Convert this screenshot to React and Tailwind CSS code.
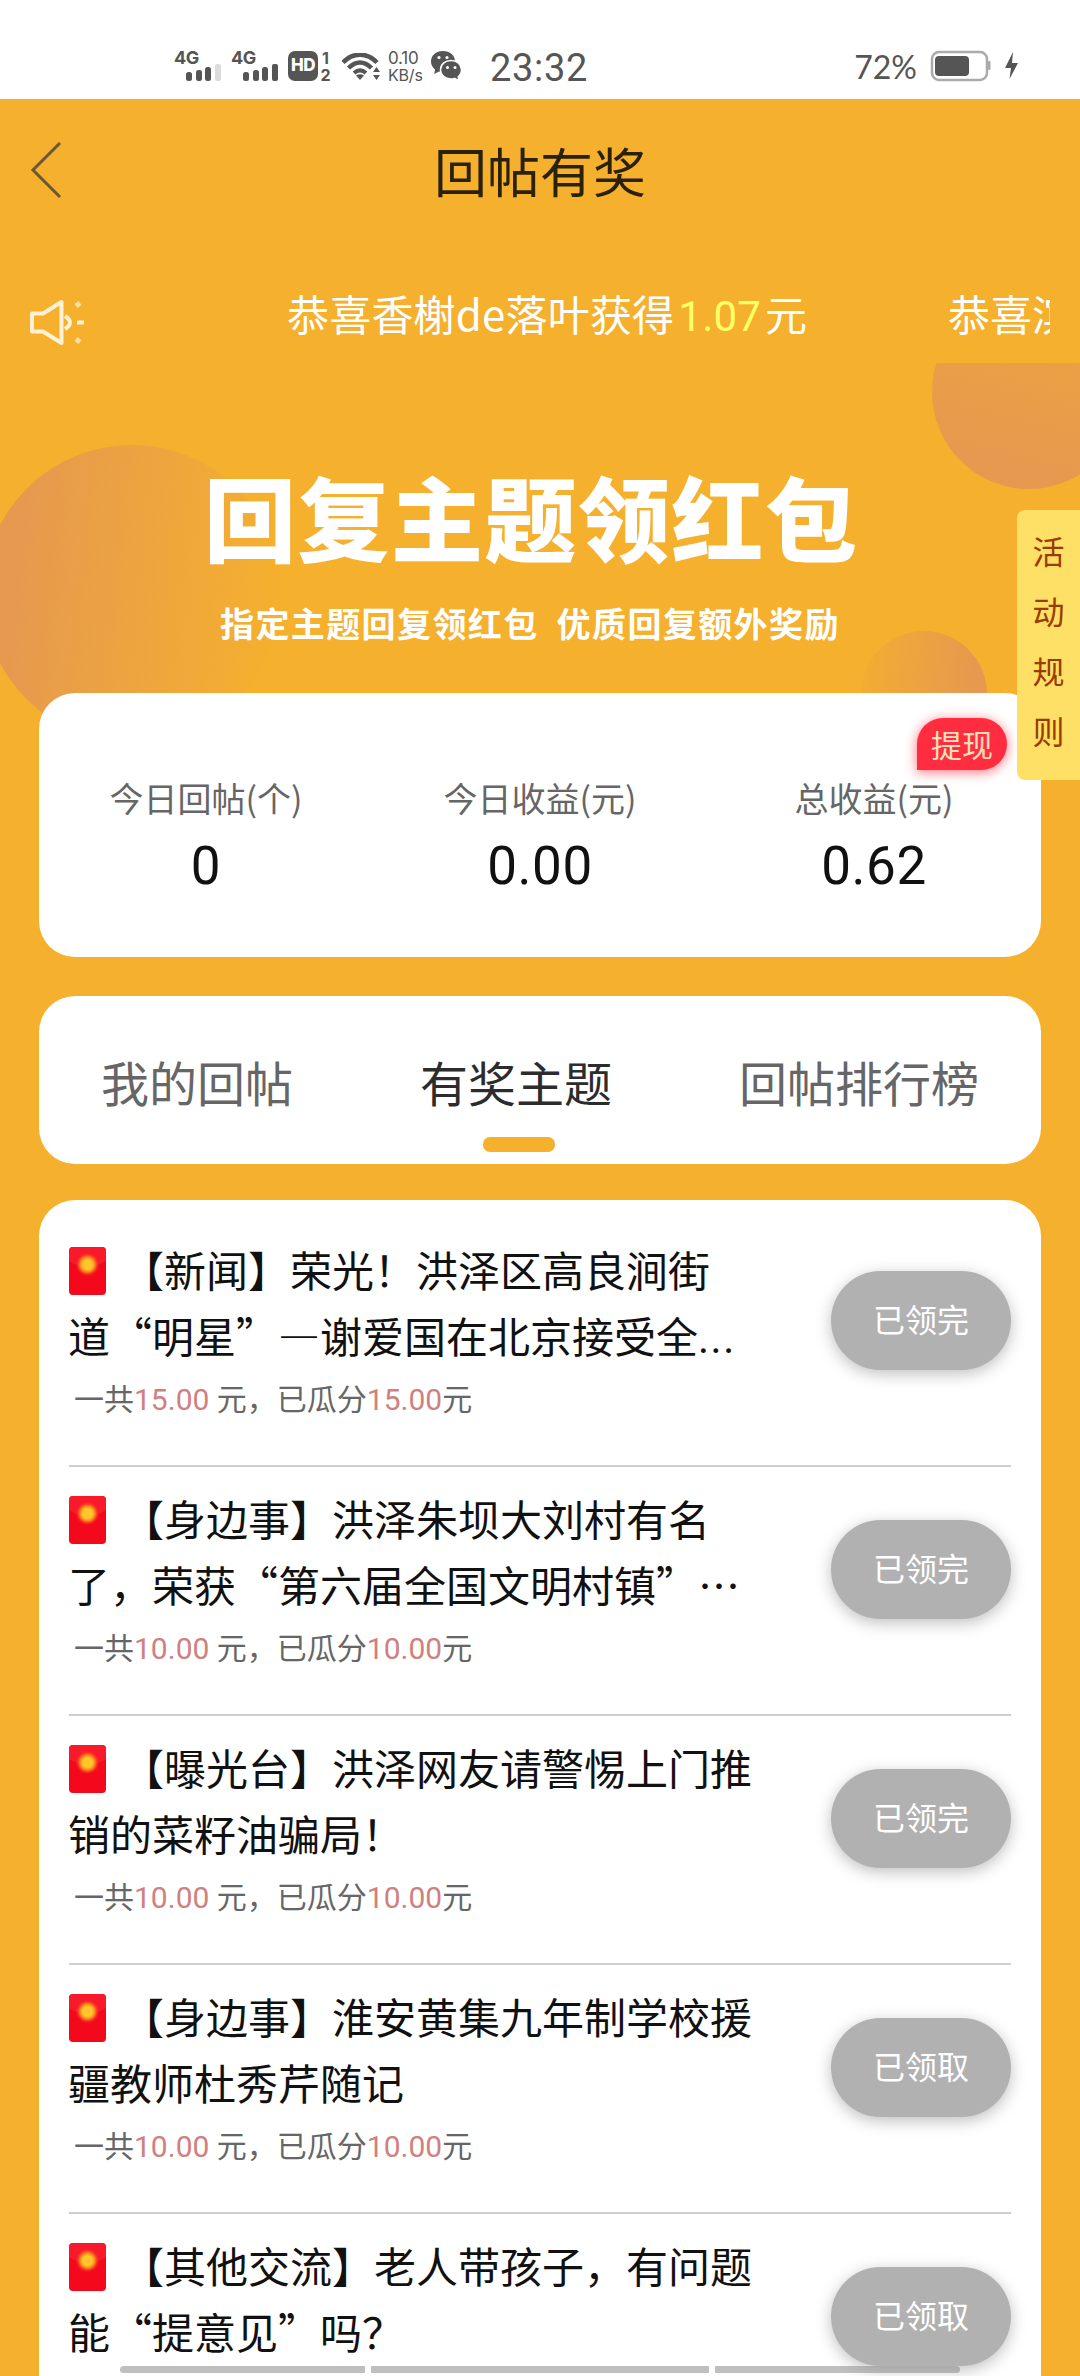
const notices = [
  { id: 1, name: "香榭de落叶", amount: "1.07" },
];

const stats = [
  { label: "今日回帖(个)", value: "0" },
  { label: "今日收益(元)", value: "0.00" },
  { label: "总收益(元)", value: "0.62" },
];

const topics = [
  {
    lines: ["【新闻】荣光！洪泽区高良涧街", "道“明星”—谢爱国在北京接受全"],
    more: true,
    total: "15.00",
    used: "15.00",
    status: "已领完",
  },
  {
    lines: ["【身边事】洪泽朱坝大刘村有名", "了，荣获“第六届全国文明村镇”…"],
    total: "10.00",
    used: "10.00",
    status: "已领完",
  },
  {
    lines: ["【曝光台】洪泽网友请警惕上门推", "销的菜籽油骗局！"],
    total: "10.00",
    used: "10.00",
    status: "已领完",
  },
  {
    lines: ["【身边事】淮安黄集九年制学校援", "疆教师杜秀芹随记"],
    total: "10.00",
    used: "10.00",
    status: "已领取",
  },
  {
    lines: ["【其他交流】老人带孩子，有问题", "能“提意见”吗？"],
    total: "10.00",
    used: "10.00",
    status: "已领取",
  },
];

function Signal({ weak }) {
  return (
    <div className="relative h-[34px] w-[48px]">
      <span className="absolute left-0 top-0 font-['Inter'] text-[18px] leading-[17px] font-bold tracking-[-0.5px]">4G</span>
      <svg className="absolute left-[12px] top-[15px]" width="36" height="17" fill="#555">
        <rect x="0" y="8" width="6" height="9" rx="2.5" />
        <rect x="10" y="6" width="6" height="11" rx="2.5" />
        <rect x="19" y="3" width="6" height="14" rx="2.5" />
        <rect x="29" y="0" width="6" height="17" rx="2" fill={weak ? "#dcdcdc" : "#555"} />
      </svg>
    </div>
  );
}

function StatusBar() {
  return (
    <div className="flex h-[99px] shrink-0 items-start bg-white pl-[174px] pt-[49px] text-[#555]">
      <Signal weak />
      <div className="ml-[9px]">
        <Signal />
      </div>

      {/* HD badge */}
      <div className="ml-[9px] mt-[2px] flex h-[30px] w-[30px] items-center justify-center rounded-[7px] bg-[#555] font-['Inter'] text-[17px] font-extrabold tracking-[-0.5px] text-white">
        HD
      </div>
      <div className="ml-[2px] mt-[1px] w-[11px] text-center font-['Inter'] text-[16px] leading-[17px] font-bold">
        <div>1</div>
        <div>2</div>
      </div>

      {/* wifi */}
      <svg className="ml-[11px] mt-[4px]" width="40" height="30" viewBox="0 0 40 30" fill="none" stroke="#555">
        <path d="M1 9.5C11 -1 25 -1 35 9.5" strokeWidth="4.500" />
        <path d="M6.500 15C14 7.500 22 7.500 29.500 15" strokeWidth="4.500" />
        <path d="M12 20C16 16.500 20 16.500 24 20" strokeWidth="4" />
        <path d="M14 22.500Q18 20 22 22.500L18 27Z" fill="#555" stroke="none" />
        <path d="M34.500 14L38 19H31ZM34.500 27L38 22H31Z" fill="#555" stroke="none" />
      </svg>

      <div className="ml-[6px] mt-[1px] w-[38px] text-[16px] leading-[17px] font-['Inter'] tracking-[-0.2px]">
        <div className="text-[17px]">0.10</div>
        <div>KB/s</div>
      </div>

      {/* wechat */}
      <svg className="ml-[5px] mt-[2px]" width="31" height="31" viewBox="0 0 31 31">
        <path d="M12 0C5 0 0 4.500 0 10.500c0 3.500 1.700 6 4 8l-.7 4.500 4.700-2.500c1.300.4 2.600.5 4 .5 7 0 12-4.500 12-10.500S19 0 12 0Z" fill="#555" />
        <path d="M20 9.500c-6 0-10.500 4-10.500 9.300S14 28 20 28c1.300 0 2.500-.2 3.600-.6l4.400 2.400-.8-4c2-1.600 3.300-4 3.300-7 0-5.300-4.500-9.300-10.500-9.300Z" fill="#555" stroke="#fff" strokeWidth="1.500" />
        <circle cx="8" cy="6.500" r="1.600" fill="#fff" />
        <circle cx="16" cy="6.500" r="1.600" fill="#fff" />
        <circle cx="16.500" cy="16.500" r="1.500" fill="#fff" />
        <circle cx="24" cy="16.500" r="1.500" fill="#fff" />
      </svg>

      <span className="ml-[28px] font-['Roboto'] text-[38px] leading-[38px] tracking-[0.7px] whitespace-nowrap">23:32</span>

      <div className="ml-auto mr-[58px] flex items-start">
        <span className="mt-[2px] font-['Lato'] text-[32px] leading-[31px]">72%</span>
        <svg className="ml-[13px] mt-[1px]" width="92" height="32" viewBox="0 0 92 32">
          <rect x="2" y="2" width="55" height="28" rx="7" fill="none" stroke="#aaa" strokeWidth="2.500" />
          <rect x="5" y="6" width="34" height="20" rx="4" fill="#555" />
          <rect x="58" y="11" width="2.500" height="9" rx="1" fill="#aaa" />
          <path d="M83 2L75 18H81L79.500 29L88 13H82Z" fill="#555" />
        </svg>
      </div>
    </div>
  );
}

function NoticeBar() {
  return (
    <div className="flex h-[90px] shrink-0 items-center pl-[28px] pr-[30px]">
      <svg className="mt-[15px] shrink-0" width="60" height="50" viewBox="0 0 60 50" fill="none" stroke="#fff1d6" strokeWidth="4">
        <path d="M4 15.500H15L33.500 4V45L15 33.500H4Z" strokeLinejoin="round" />
        <path d="M37 18Q47 24.500 37 31" />
        <path d="M49 24.500H56" />
        <path d="M48 8L52 5M48 41L52 44" strokeWidth="5" opacity="0.700" />
      </svg>
      <div className="ml-[199px] flex flex-1 overflow-hidden text-[42px] leading-[60px] whitespace-nowrap text-white">
        {notices.map((n) => (
          <div key={n.id} className="w-[661px] shrink-0 tracking-[0.2px]">
            恭喜{n.name}获得
            <span className="px-[4px] font-['Roboto',sans-serif] text-[#ffff66]">{n.amount}</span>元
          </div>
        ))}
        <div className="shrink-0">恭喜滨</div>
      </div>
    </div>
  );
}

function Banner() {
  return (
    <div className="relative h-[330px] shrink-0">
      {/* decorative circles run on behind the stats card */}
      <svg className="absolute left-0 top-0" width="1080" height="400">
        <defs>
          <linearGradient id="a" x1="0" x2="1" y1="0.4" y2="0.5">
            <stop offset="0.1" stopColor="#e6994f" />
            <stop offset="1" stopColor="#f5b02e" />
          </linearGradient>
          <linearGradient id="b" x1="0.4" x2="0.6" y1="1" y2="0.2">
            <stop offset="0.1" stopColor="#e6994f" />
            <stop offset="1" stopColor="#eda142" />
          </linearGradient>
          <linearGradient id="c" x1="1" x2="0" y1="0.5" y2="0.4">
            <stop offset="0.1" stopColor="#e6994f" />
            <stop offset="1" stopColor="#f3ac33" />
          </linearGradient>
        </defs>
        <circle cx="132" cy="231" r="149" fill="url(#a)" />
        <circle cx="1029" cy="29" r="97" fill="url(#b)" />
        <circle cx="924" cy="331" r="63" fill="url(#c)" />
      </svg>
      <div className="relative pt-[86px] text-white">
        <h2 className="pl-[204px] text-[92px] leading-[132px] font-black tracking-[1.5px] whitespace-nowrap">回复主题领红包</h2>
        <p className="mt-[19px] pl-[220px] text-[34px] leading-[46px] font-bold tracking-[1.4px] whitespace-nowrap">
          指定主题回复领红包<span className="ml-[18px]">优质回复额外奖励</span>
        </p>
      </div>
    </div>
  );
}

function RedPacket() {
  return (
    <svg className="relative top-[2px] mr-[16px] shrink-0" width="37" height="48" viewBox="0 0 37 48">
      <defs>
        <radialGradient id="coin">
          <stop offset="0.4" stopColor="#ffc62c" />
          <stop offset="0.65" stopColor="#fb7a1c" />
          <stop offset="1" stopColor="#f9202a" stopOpacity="0" />
        </radialGradient>
      </defs>
      <rect width="37" height="48" rx="4" fill="#f4091c" />
      <path d="M4 0H33Q37 0 37 4V14Q18 26 0 14V4Q0 0 4 0Z" fill="#f81a2a" />
      <circle cx="18.500" cy="17.500" r="12" fill="url(#coin)" />
    </svg>
  );
}

function TopicRow({ topic }) {
  return (
    <div className="flex h-[249px] shrink-0 items-start border-b-2 border-[#cfcfcf] pt-[18px]">
      <div className="flex-1 whitespace-nowrap">
        <div className="text-[42px] leading-[66px] text-[#111]">
          <div className="flex h-[66px] items-center">
            <RedPacket />
            {topic.lines[0]}
          </div>
          <div className="-ml-px h-[66px]">
            {topic.lines[1]}
            {topic.more && <span className="font-['Roboto',sans-serif] leading-none tracking-[1.5px]">...</span>}
          </div>
        </div>
        <p className="mt-[7px] h-[44px] pl-[5px] text-[30px] leading-[44px] text-[#666]">
          一共<span className="font-['Roboto',sans-serif] text-[#d08080]">{topic.total} </span>元，已瓜分
          <span className="font-['Roboto',sans-serif] text-[#d08080]">{topic.used}</span>元
        </p>
      </div>
      <button className="mt-[35px] h-[99px] w-[180px] rounded-full bg-[#b1b1b1] pb-[5px] text-[32px] text-white shadow-[0_4px_16px_rgba(0,0,0,0.25)]">
        {topic.status}
      </button>
    </div>
  );
}

export default function App() {
  return (
    <div
      lang="zh-CN"
      className="relative flex h-[2376px] w-[1080px] flex-col overflow-hidden bg-[#f5b02e] font-['Noto_Sans_CJK_SC',sans-serif] [text-spacing-trim:space-all]"
    >
      <StatusBar />

      <header className="grid h-[171px] shrink-0 grid-cols-[1fr_auto_1fr] items-start pt-[31px]">
        <svg className="ml-[30px] mt-[11px]" width="34" height="58" viewBox="0 0 34 58" fill="none" stroke="#6b5636" strokeWidth="3">
          <path d="M30 2L3 29L30 56" />
        </svg>
        <h1 className="text-[53px] leading-[80px] text-[#2b2008]">回帖有奖</h1>
      </header>

      <NoticeBar />
      <div className="h-[3px] shrink-0" />
      <Banner />

      <main className="relative mx-[39px] flex min-h-0 flex-1 flex-col">
        {/* earnings */}
        <section className="relative grid h-[264px] shrink-0 grid-cols-3 rounded-[36px] bg-white pt-[82px] text-center">
          {stats.map((s) => (
            <div key={s.label}>
              <p className="text-[34px] leading-[46px] text-[#666]">{s.label}</p>
              <p className="mt-[14px] font-['Roboto',sans-serif] text-[53px] leading-[62px] tracking-[0.5px] text-[#111]">{s.value}</p>
            </div>
          ))}
          <button className="absolute right-[34px] top-[25px] h-[52px] w-[90px] rounded-[26px] rounded-bl-none bg-[#ff2d3f] text-[31px] leading-[52px] text-[#ffe0bd] shadow-[0_2px_12px_rgba(255,45,63,0.7)]">
            提现
          </button>
        </section>

        {/* tabs */}
        <nav className="mt-[39px] flex h-[168px] shrink-0 justify-between rounded-[36px] bg-white pl-[62px] pr-[62px] pt-[50px] text-[48px] leading-[70px] text-[#666]">
          <span>我的回帖</span>
          <div className="text-[#2c2c2c]">
            <span>有奖主题</span>
            <div className="ml-[63px] mt-[21px] h-[15px] w-[72px] rounded-[7px] bg-[#f5b02e]" />
          </div>
          <span>回帖排行榜</span>
        </nav>

        <section className="mt-[36px] flex min-h-0 flex-1 flex-col overflow-hidden rounded-t-[36px] bg-white px-[30px] pt-[18px]">
          {topics.map((t) => (
            <TopicRow key={t.lines[0]} topic={t} />
          ))}
        </section>
      </main>

      {/* activity rules tab pinned to the right edge */}
      <aside className="absolute right-0 top-[510px] flex h-[270px] w-[63px] flex-col items-center rounded-l-[8px] bg-[#ffe066] pt-[10px] text-[32px] leading-[60px] text-[#9a3b00]">
        {[..."活动规则"].map((c) => (
          <span key={c}>{c}</span>
        ))}
      </aside>

      {/* system gesture hints */}
      <div className="absolute left-[120px] top-[2366px] flex h-[7px] w-[840px] gap-[6px]">
        <div className="w-[245px] rounded-l-full bg-[#8a8a8a]/55" />
        <div className="flex-1 bg-[#8a8a8a]/55" />
        <div className="w-[245px] rounded-r-full bg-[#8a8a8a]/55" />
      </div>
    </div>
  );
}
